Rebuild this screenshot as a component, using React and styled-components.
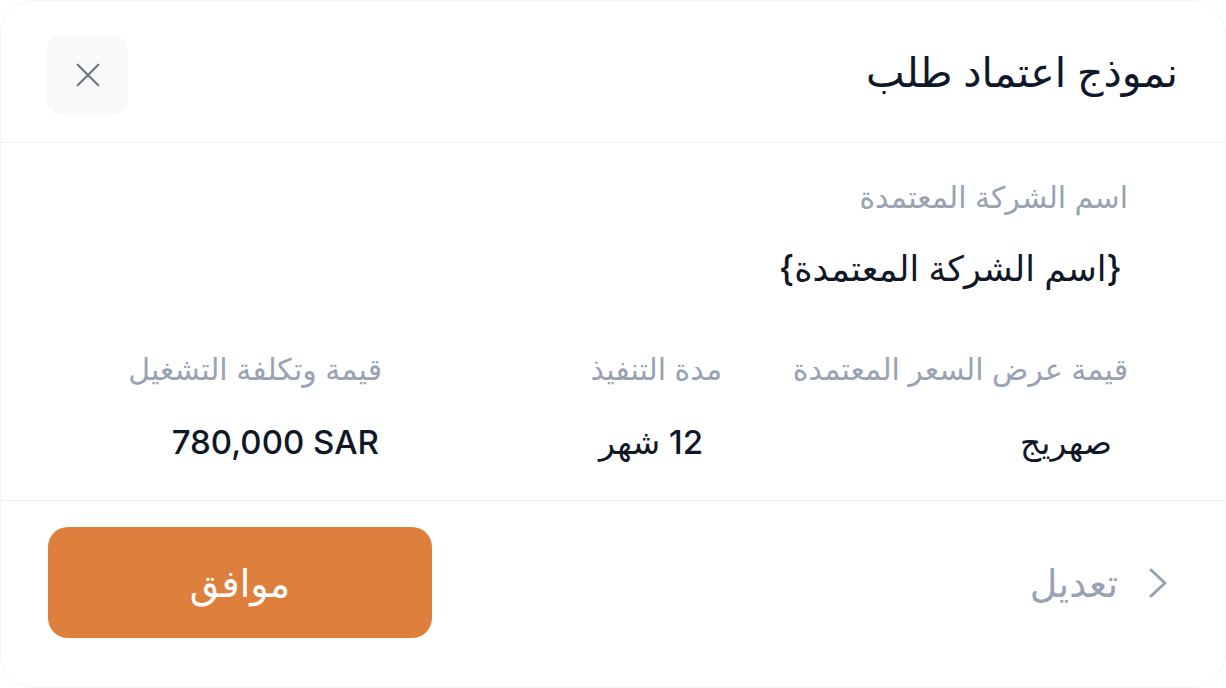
import styled, { createGlobalStyle } from 'styled-components';

const GlobalStyle = createGlobalStyle`
  html, body {
    margin: 0;
    padding: 0;
    background: #ffffff;
  }
  body {
    font-family: "Inter", "DejaVu Sans", sans-serif;
    direction: rtl;
  }
  * { box-sizing: border-box; }
`

const Card = styled.section`
  width: 1226px;
  height: 688px;
  display: flex;
  flex-direction: column;
  background: #fff;
  border: 1px solid #f4f5f7;
  border-radius: 34px;
  overflow: hidden;
`

const Header = styled.header`
  height: 142px;
  padding: 0 47px 0 46px;
  display: flex;
  align-items: center;
  justify-content: space-between;
  border-bottom: 1px solid #eef1f5;
`

const Title = styled.h2`
  margin: 0;
  font-size: 41px;
  font-weight: 500;
  color: #0f172a;
`

const CloseButton = styled.button`
  width: 81px;
  height: 80px;
  margin-top: 7px;
  border: 0;
  border-radius: 15px;
  background: #f8f9fb;
  display: flex;
  align-items: center;
  justify-content: center;
  padding: 0;
  cursor: pointer;
`

const Body = styled.div`
  padding: 32px 97px 35px 47px;
  border-bottom: 1px solid #eef1f5;
`

const Label = styled.div`
  font-size: 30px;
  line-height: 44px;
  color: #98a2b3;
`

const Value = styled.div`
  margin-top: ${p => p.$gap || 26}px;
  font-size: ${p => p.$size || 33}px;
  line-height: 46px;
  font-weight: 500;
  color: #101828;
  padding-right: ${p => p.$inset || 0}px;
  direction: ${p => (p.$ltr ? 'ltr' : 'rtl')};
  text-align: right;
`

const Grid = styled.div`
  margin-top: 56px;
  display: grid;
  grid-template-columns: 406px 340px 1fr;
`

const Field = styled.div`
  display: flex;
  flex-direction: column;
`

const Footer = styled.footer`
  flex: 1;
  padding: 26px 57px 0 47px;
  display: flex;
  align-items: flex-start;
  justify-content: space-between;
`

const EditLink = styled.button`
  height: 111px;
  border: 0;
  background: none;
  padding: 0;
  display: flex;
  align-items: center;
  gap: 30px;
  font-family: inherit;
  font-size: 38px;
  color: #98a2b3;
  cursor: pointer;
`

const ApproveButton = styled.button`
  width: 384px;
  height: 111px;
  border: 0;
  border-radius: 20px;
  background: #de7f3d;
  color: #fff;
  font-family: inherit;
  font-size: 38px;
  font-weight: 400;
  cursor: pointer;
`

export default function App() {
  return (
    <>
      <GlobalStyle />
      <Card>
        <Header>
          <Title>نموذج اعتماد طلب</Title>
          <CloseButton aria-label="إغلاق">
            <svg width="26" height="26" viewBox="0 0 24 24" fill="none" stroke="#6b7280" strokeWidth="1.9" strokeLinecap="round">
              <path d="M2.5 2.5l19 19M21.5 2.5l-19 19" />
            </svg>
          </CloseButton>
        </Header>
        <Body>
          <Field>
            <Label>اسم الشركة المعتمدة</Label>
            <Value $size={35} $inset={6}>{'{اسم الشركة المعتمدة}'}</Value>
          </Field>
          <Grid>
            <Field>
              <Label>قيمة عرض السعر المعتمدة</Label>
              <Value $gap={28} $inset={16}>صهريج</Value>
            </Field>
            <Field>
              <Label>مدة التنفيذ</Label>
              <Value $gap={28} $inset={19}>12 شهر</Value>
            </Field>
            <Field>
              <Label>قيمة وتكلفة التشغيل</Label>
              <Value $gap={28} $inset={3} $ltr>780,000 SAR</Value>
            </Field>
          </Grid>
        </Body>
        <Footer>
          <EditLink>
            <svg width="20" height="30" viewBox="0 0 20 30" fill="none" stroke="#98a2b3" strokeWidth="3" strokeLinecap="round" strokeLinejoin="round">
              <path d="M3 2l14 13L3 28" />
            </svg>
            تعديل
          </EditLink>
          <ApproveButton>موافق</ApproveButton>
        </Footer>
      </Card>
    </>
  )
}
